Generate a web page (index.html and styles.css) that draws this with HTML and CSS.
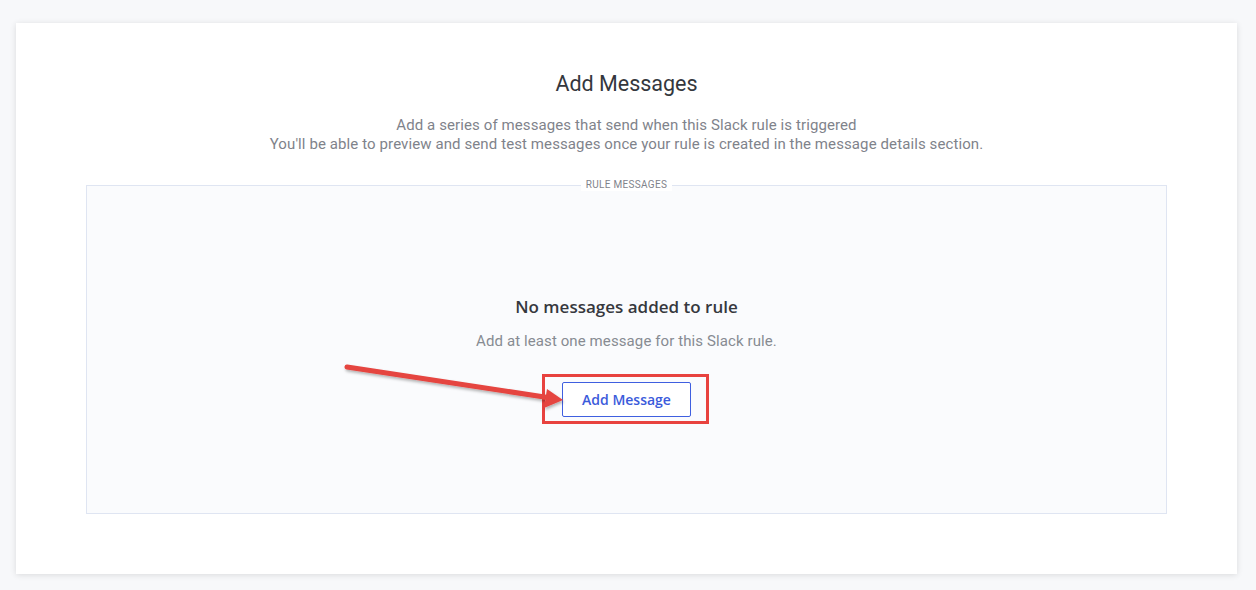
FILE: index.html
```html
<!DOCTYPE html>
<html lang="en">
<head>
    <meta charset="UTF-8">
    <meta name="viewport" content="width=device-width, initial-scale=1.0">
    <title>Add Messages</title>
    <link rel="stylesheet" href="styles.css">
</head>
<body>
    <div class="card">
        <h1 class="title">Add Messages</h1>
        <p class="desc">
            Add a series of messages that send when this Slack rule is triggered<br>
            You'll be able to preview and send test messages once your rule is created in the message details section.
        </p>

        <fieldset class="rule-box">
            <legend>Rule Messages</legend>
            <div class="empty">
                <h2>No messages added to rule</h2>
                <p>Add at least one message for this Slack rule.</p>
                <div class="btn-wrap">
                    <button type="button" class="btn-outline">Add Message</button>
                    <span class="annot-box"></span>
                    <svg class="annot-arrow" width="230" height="50" viewBox="0 0 230 50">
                        <defs>
                            <filter id="shadow" x="-10%" y="-50%" width="120%" height="200%">
                                <feDropShadow dx="1" dy="2" stdDeviation="1.5" flood-color="#000" flood-opacity="0.3"/>
                            </filter>
                        </defs>
                        <g filter="url(#shadow)">
                            <line x1="4" y1="6" x2="208" y2="37" stroke="#e5443f" stroke-width="5" stroke-linecap="round"/>
                            <polygon points="220,39 204,28 201,47" fill="#e5443f"/>
                        </g>
                    </svg>
                </div>
            </div>
        </fieldset>
    </div>
</body>
</html>
```

FILE: styles.css
```css
* {
    margin: 0;
    padding: 0;
    box-sizing: border-box;
}

body {
    background: #f7f8fa;
    font-family: 'Roboto', sans-serif;
    padding: 23px 19px 16px 16px;
    min-height: 100vh;
}

.card {
    background: white;
    height: 551px;
    padding: 49px 70px 60px;
    box-shadow: 0 1px 6px rgba(0, 0, 0, 0.12);
    text-align: center;
}

.title {
    font-size: 21.5px;
    font-weight: 400;
    color: #34373d;
    line-height: 24px;
}

.desc {
    margin-top: 20px;
    font-size: 15px;
    letter-spacing: 0.1px;
    line-height: 19px;
    color: #7f838b;
}

.rule-box {
    margin-top: 25px;
    border: 1px solid #dfe5f2;
    background: #fafbfd;
    height: 335px;
}

.rule-box legend {
    margin: 0 auto;
    padding: 0 5px;
    font-size: 10px;
    letter-spacing: 0.3px;
    text-transform: uppercase;
    color: #7f838b;
    background: white;
    line-height: 12px;
}

.empty {
    display: flex;
    flex-direction: column;
    align-items: center;
    padding-top: 105px;
}

.empty h2 {
    font-family: 'Open Sans', sans-serif;
    font-size: 17px;
    font-weight: 600;
    color: #36383d;
    line-height: 22px;
}

.empty p {
    margin-top: 13px;
    font-size: 15px;
    letter-spacing: 0.1px;
    line-height: 20px;
    color: #878b92;
}

.btn-wrap {
    position: relative;
    margin-top: 31px;
}

.btn-outline {
    width: 129px;
    height: 35px;
    background: white;
    border: 1px solid #3f5fe0;
    border-radius: 2px;
    color: #3b5bdb;
    font-family: 'Open Sans', sans-serif;
    font-size: 14px;
    font-weight: 600;
    cursor: pointer;
}

.annot-box {
    position: absolute;
    top: -8px;
    bottom: -7px;
    left: -20px;
    right: -18px;
    border: 3px solid #e8423f;
    pointer-events: none;
}

.annot-arrow {
    position: absolute;
    left: -219px;
    top: -21px;
    overflow: visible;
    pointer-events: none;
}
```
